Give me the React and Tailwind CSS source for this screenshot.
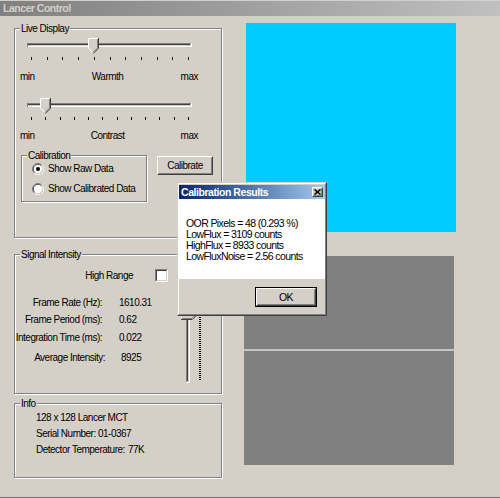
const ui = "font-['Liberation_Sans',Arial,sans-serif]"

function Raised({ className = '', children }) {
  return (
    <div className={`border border-t-white border-l-white border-r-[#404040] border-b-[#404040] ${className}`}>
      <div className="w-full h-full border border-t-[#d4d0c8] border-l-[#d4d0c8] border-r-[#808080] border-b-[#808080] flex items-center justify-center">
        {children}
      </div>
    </div>
  )
}

function GroupBox({ label, className = '', children }) {
  return (
    <div className={`relative border border-[#808080] shadow-[inset_1px_1px_0_#fff,1px_1px_0_#fff] ${className}`}>
      <span className="absolute left-[5px] -top-[7px] bg-[#d4d0c8] px-[1px] leading-[13px]">{label}</span>
      {children}
    </div>
  )
}

// horizontal trackbar, thumb points down
function HSlider({ thumb, ticks }) {
  const x0 = thumb
  return (
    <svg width="170" height="26" className="block ml-[9px]" shapeRendering="crispEdges">
      <rect x="3" y="7" width="164" height="1" fill="#808080" />
      <rect x="4" y="8" width="162" height="1" fill="#404040" />
      <rect x="4" y="9" width="163" height="1" fill="#d4d0c8" />
      <rect x="3" y="10" width="165" height="1" fill="#fff" />
      <rect x="3" y="7" width="1" height="4" fill="#808080" />
      <rect x="167" y="7" width="1" height="4" fill="#fff" />
      <polygon points={`${x0},2 ${x0 + 10},2 ${x0 + 10},12 ${x0 + 5},17 ${x0},12`} fill="#d4d0c8" />
      <g shapeRendering="auto">
        <polyline points={`${x0 + 0.5},12 ${x0 + 0.5},2.5 ${x0 + 10},2.5`} fill="none" stroke="#fff" />
        <line x1={x0 + 0.5} y1="12" x2={x0 + 5} y2="16.5" stroke="#fff" />
        <polyline points={`${x0 + 10.5},2 ${x0 + 10.5},12.3 ${x0 + 5.3},17.5`} fill="none" stroke="#404040" />
        <polyline points={`${x0 + 9.5},3 ${x0 + 9.5},11.8 ${x0 + 5.3},16.2`} fill="none" stroke="#808080" />
      </g>
      {Array.from({ length: ticks }).map((_, i) => (
        <rect key={i} x={Math.round(7 + (i * 157) / (ticks - 1))} y="21" width="1" height="3" fill="#000" />
      ))}
    </svg>
  )
}

// vertical trackbar, thumb points right
function VSlider() {
  return (
    <svg width="28" height="90" className="block" shapeRendering="crispEdges">
      <rect x="8" y="4" width="1" height="82" fill="#808080" />
      <rect x="9" y="5" width="1" height="80" fill="#404040" />
      <rect x="10" y="5" width="1" height="81" fill="#d4d0c8" />
      <rect x="11" y="4" width="1" height="83" fill="#fff" />
      <rect x="8" y="86" width="4" height="1" fill="#fff" />
      <polygon points="3,13 14,13 19,18 14,23 3,23" fill="#d4d0c8" />
      <g shapeRendering="auto">
        <polyline points="3.5,23 3.5,13.5 14,13.5 18.5,18" fill="none" stroke="#fff" />
        <polyline points="3,23.5 14.2,23.5 19.5,18.2" fill="none" stroke="#404040" />
        <polyline points="4,22.5 14,22.5 18.3,18.2" fill="none" stroke="#808080" />
      </g>
      {Array.from({ length: 32 }).map((_, i) => (
        <rect key={i} x="21" y={21 + i * 2} width="2" height="1" fill="#000" />
      ))}
    </svg>
  )
}

function Radio({ checked }) {
  return (
    <svg width="12" height="12" className="block shrink-0">
      <circle cx="6" cy="6" r="5.5" fill="#fff" stroke="#808080" />
      <path d="M10.1 2.2 A5.5 5.5 0 0 1 2.2 10.1" fill="none" stroke="#fff" />
      <path d="M2.6 9.2 A4.5 4.5 0 0 1 9.2 2.6" fill="none" stroke="#404040" />
      <path d="M9.2 2.6 A4.5 4.5 0 0 1 2.6 9.2" fill="none" stroke="#d4d0c8" />
      {checked && <circle cx="6" cy="6" r="2" fill="#000" />}
    </svg>
  )
}

function Checkbox() {
  return (
    <div className="w-[13px] h-[13px] border border-t-[#808080] border-l-[#808080] border-r-white border-b-white">
      <div className="w-full h-full bg-white border border-t-[#404040] border-l-[#404040] border-r-[#d4d0c8] border-b-[#d4d0c8]" />
    </div>
  )
}

function Dialog() {
  return (
    <div className={`absolute left-[177px] top-[182px] w-[150px] h-[134px] border border-t-[#d4d0c8] border-l-[#d4d0c8] border-r-[#404040] border-b-[#404040] ${ui}`}>
      <div className="h-full border border-t-white border-l-white border-r-[#808080] border-b-[#808080] bg-[#d4d0c8] pt-[1px] flex flex-col">
        <div className="h-[14px] flex items-center justify-between bg-linear-to-r from-[#0a246a] to-[#a6caf0] pl-[2px] pr-[2px]">
          <span className="text-[10.5px] leading-[14px] font-bold tracking-[-0.45px] text-white">Calibration Results</span>
          <Raised className="w-[11px] h-[10px] bg-[#d4d0c8]">
            <svg width="7" height="6" className="block">
              <path d="M0.5 0.5 L6.5 5.5 M6.5 0.5 L0.5 5.5" stroke="#000" strokeWidth="1.6" />
            </svg>
          </Raised>
        </div>
        <div className="h-[80px] bg-white pt-[19px] pl-[7px] text-[10.5px] leading-[11px] tracking-[-0.6px]">
          <div>OOR Pixels = 48 (0.293 %)</div>
          <div>LowFlux = 3109 counts</div>
          <div>HighFlux = 8933 counts</div>
          <div>LowFluxNoise = 2.56 counts</div>
        </div>
        <div className="flex justify-end pr-[8px] pt-[8px]">
          <div className="border border-black">
            <Raised className="w-[60px] h-[18px] text-[10.5px]">OK</Raised>
          </div>
        </div>
      </div>
    </div>
  )
}

export default function App() {
  return (
    <div className={`relative w-[500px] h-[498px] overflow-hidden whitespace-nowrap bg-[#d4d0c8] border-b border-[#707070] text-black ${ui} text-[10px] tracking-[-0.5px] leading-[13px]`}>
      {/* title bar (inactive) */}
      <div className="h-[16px] border-t border-[#d4d0c8] bg-linear-to-r from-[#808080] to-[#c0c0c0] flex items-center pl-[3px]">
        <span className="text-[10.5px] leading-[15px] font-bold tracking-[-0.5px] text-[#d4d0c8]">Lancer Control</span>
      </div>

      <div className="flex">
        {/* left controls */}
        <div className="w-[232px] pl-[14px] pt-[12px]">
          <GroupBox label="Live Display" className="w-[208px] h-[210px]">
            <div className="h-[7px]" />
            <HSlider thumb={64} ticks={11} />
            <div className="mt-[8px] ml-[5px] w-[178px] h-[13px] flex justify-between">
              <span>min</span>
              <span>Warmth</span>
              <span>max</span>
            </div>
            <div className="mt-[13px]">
              <HSlider thumb={16} ticks={12} />
            </div>
            <div className="mt-[7px] ml-[5px] w-[178px] h-[13px] flex justify-between">
              <span>min</span>
              <span>Contrast</span>
              <span>max</span>
            </div>
            <div className="mt-[13px] ml-[6px] flex items-start">
              <GroupBox label="Calibration" className="w-[126px] h-[47px]">
                <div className="pt-[6px] pl-[10px] flex flex-col gap-[7px]">
                  <div className="h-[13px] flex items-center gap-[4px]">
                    <Radio checked />
                    <span>Show Raw Data</span>
                  </div>
                  <div className="h-[13px] flex items-center gap-[4px]">
                    <Radio />
                    <span>Show Calibrated Data</span>
                  </div>
                </div>
              </GroupBox>
              <Raised className="ml-[10px] mt-[1px] w-[56px] h-[19px]">Calibrate</Raised>
            </div>
          </GroupBox>

          <GroupBox label="Signal Intensity" className="w-[208px] h-[140px] mt-[16px]">
            <div className="mt-[14px] h-[13px] flex items-center">
              <span className="w-[118px] text-right">High Range</span>
              <div className="ml-[22px]">
                <Checkbox />
              </div>
            </div>
            <div className="mt-[14px] flex">
              <div className="w-[163px]">
                <div className="h-[13px] flex">
                  <span className="w-[87px] text-right">Frame Rate (Hz):</span>
                  <span className="ml-[17px]">1610.31</span>
                </div>
                <div className="mt-[4px] h-[13px] flex">
                  <span className="w-[87px] text-right">Frame Period (ms):</span>
                  <span className="ml-[17px]">0.62</span>
                </div>
                <div className="mt-[5px] h-[13px] flex">
                  <span className="w-[87px] text-right">Integration Time (ms):</span>
                  <span className="ml-[17px]">0.022</span>
                </div>
                <div className="mt-[7px] h-[13px] flex">
                  <span className="w-[90px] text-right">Average Intensity:</span>
                  <span className="ml-[16px]">8925</span>
                </div>
              </div>
              <VSlider />
            </div>
          </GroupBox>

          <GroupBox label="Info" className="w-[208px] h-[75px] mt-[9px]">
            <div className="pt-[7px] pl-[21px] flex flex-col gap-[3px]">
              <div className="h-[13px]">128 x 128 Lancer MCT</div>
              <div className="h-[13px]">Serial Number: 01-0367</div>
              <div className="h-[13px] flex">
                <span className="w-[92px]">Detector Temperature:</span>
                <span>77K</span>
              </div>
            </div>
          </GroupBox>
        </div>

        {/* image views */}
        <div>
          <div className="ml-[14px] mt-[7px] w-[210px] h-[209px] bg-[#00ccff]" />
          <div className="ml-[12px] mt-[24px] w-[210px] flex flex-col">
            <div className="h-[93px] bg-[#808080]" />
            <div className="h-[2px] bg-[#c4c4c4]" />
            <div className="h-[114px] bg-[#808080]" />
          </div>
        </div>
      </div>

      <Dialog />
    </div>
  )
}
